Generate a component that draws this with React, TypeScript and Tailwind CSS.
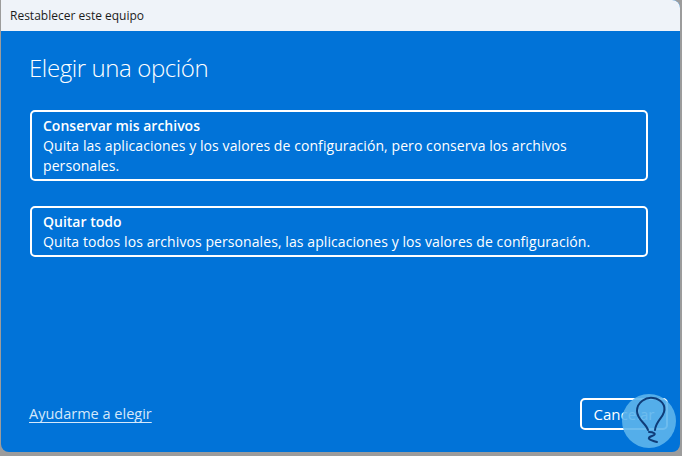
import React from "react";

export default function App() {
  return (
    <div className="w-[682px] h-[456px] bg-[#9c9c9c] overflow-hidden relative" style={{ fontFamily: '"Open Sans", "Noto Sans", sans-serif' }}>
      <div className="ml-[1px] w-[679px] h-[452px] rounded-tr-[8px] rounded-b-[8px] overflow-hidden flex flex-col bg-[#0173d8]">
        <div className="h-[31px] shrink-0 bg-[#eff3f9] flex items-center pl-[9px] text-[12px] text-[#1b1b1b]">
          Restablecer este equipo
        </div>
        <div className="flex-1 flex flex-col pl-[28px] pr-[32px] pt-[21px] pb-[22px] text-white">
          <h1 className="text-[24px] font-light leading-[32px] tracking-[-0.4px]">Elegir una opción</h1>
          <div className="mt-[26px] flex flex-col gap-[25px] pl-[1px]">
            <div className="border-2 border-white rounded-[5px] pl-[11px] pr-[11px] pt-[4px] pb-[3px]">
              <div className="text-[14px] font-semibold leading-[20px]">Conservar mis archivos</div>
              <div className="text-[14px] leading-[20px] tracking-[0.08px]">Quita las aplicaciones y los valores de configuración, pero conserva los archivos personales.</div>
            </div>
            <div className="border-2 border-white rounded-[5px] pl-[11px] pr-[11px] pt-[4px] pb-[3px]">
              <div className="text-[14px] font-semibold leading-[20px]">Quitar todo</div>
              <div className="text-[14px] leading-[20px] tracking-[0.08px]">Quita todos los archivos personales, las aplicaciones y los valores de configuración.</div>
            </div>
          </div>
          <div className="mt-auto flex items-center justify-between">
            <a className="text-[14.5px] text-[#d5e8fb] underline underline-offset-[3px]">Ayudarme a elegir</a>
            <button className="w-[88px] h-[32px] border-2 border-white rounded-[5px] text-[15px] text-white mr-[-20px]">Cancelar</button>
          </div>
        </div>
      </div>
      <svg className="absolute left-[616px] top-[390px]" width="62" height="62" viewBox="0 0 62 62">
        <circle cx="33" cy="31" r="27" fill="#5db5ec" fillOpacity="0.9" />
        <path d="M32 40 C30 33 21 30 21 21 C21 12 30 7 37 8 C45 9 50 15 48 22 C46 29 40 31 39 40" fill="none" stroke="#0f3c78" strokeWidth="2" strokeLinecap="round" />
        <path d="M33 42 C37 42 42 44 36 46 C30 48 33 50 41 52" fill="none" stroke="#0f3c78" strokeWidth="2" strokeLinecap="round" />
      </svg>
    </div>
  );
}
